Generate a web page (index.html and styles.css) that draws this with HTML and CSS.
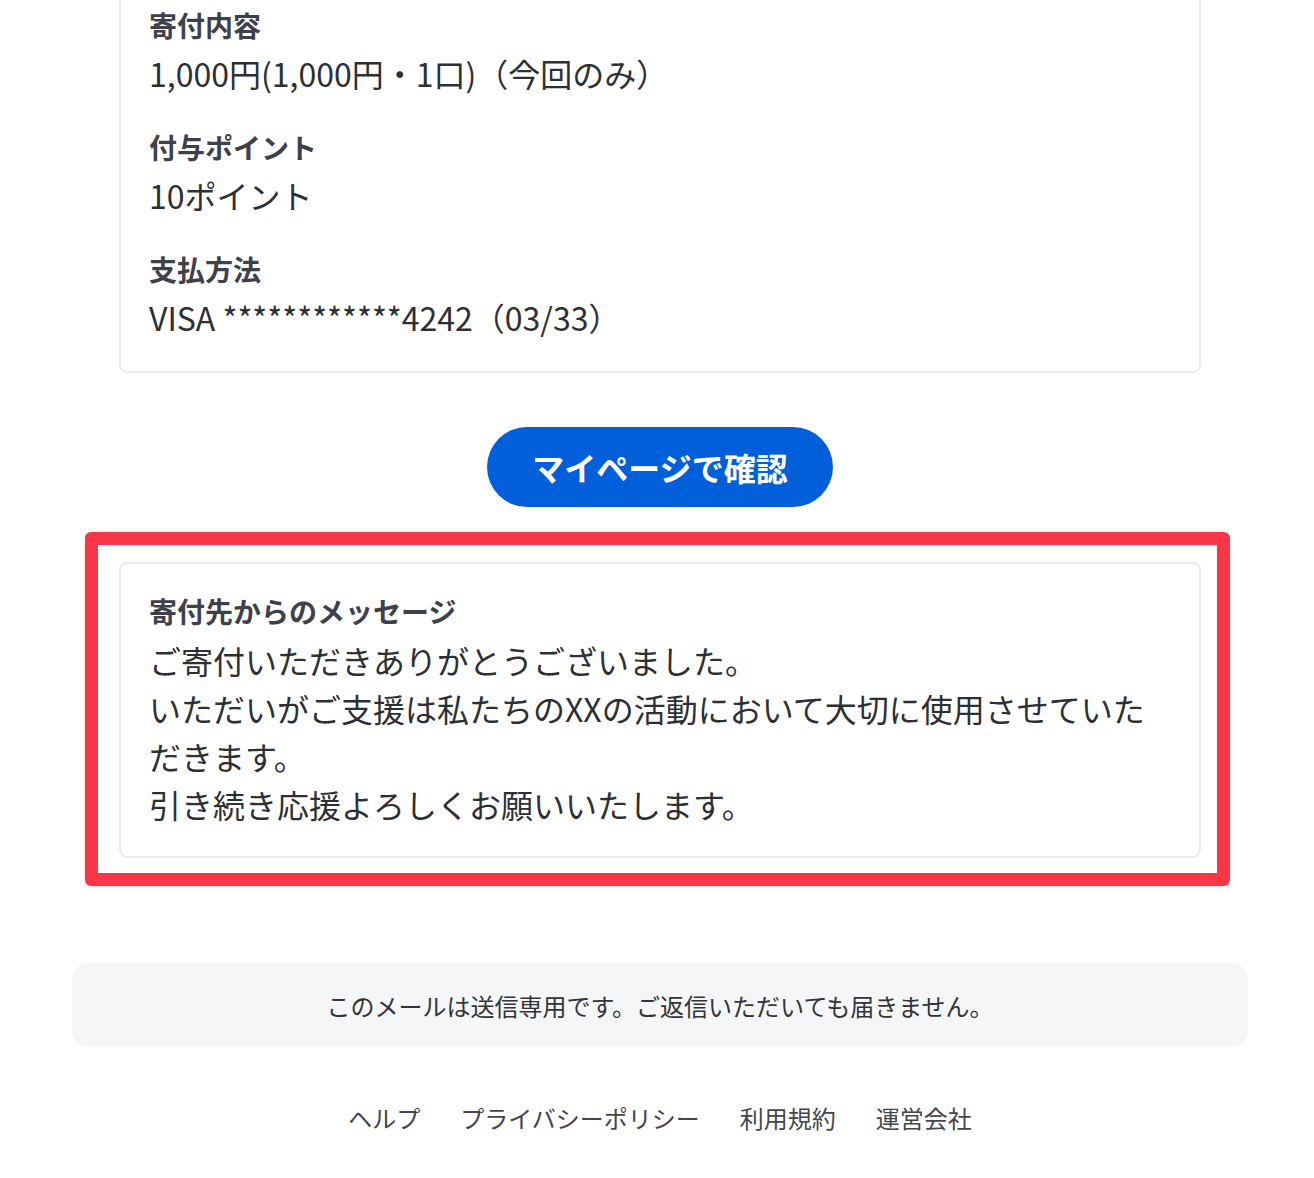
FILE: index.html
```html
<!DOCTYPE html>
<html lang="ja">
<head>
  <meta charset="UTF-8">
  <meta name="viewport" content="width=device-width, initial-scale=1.0">
  <title>寄付完了</title>
  <link rel="stylesheet" href="styles.css">
</head>
<body>
  <div class="page">
    <div class="card detail-card">
      <div class="item">
        <div class="item-label">寄付内容</div>
        <div class="item-value">1,000円(1,000円・1口)（今回のみ）</div>
      </div>
      <div class="item">
        <div class="item-label">付与ポイント</div>
        <div class="item-value">10ポイント</div>
      </div>
      <div class="item">
        <div class="item-label">支払方法</div>
        <div class="item-value">VISA ************4242（03/33）</div>
      </div>
    </div>

    <div class="action">
      <a class="mypage-button" href="#">マイページで確認</a>
    </div>

    <div class="highlight">
      <div class="card message-card">
        <div class="message-label">寄付先からのメッセージ</div>
        <p class="message-text">ご寄付いただきありがとうございました。<br>いただいがご支援は私たちのXXの活動において大切に使用させていただきます。<br>引き続き応援よろしくお願いいたします。</p>
      </div>
    </div>

    <div class="notice">このメールは送信専用です。ご返信いただいても届きません。</div>

    <nav class="footer-links">
      <a href="#">ヘルプ</a>
      <a href="#">プライバシーポリシー</a>
      <a href="#">利用規約</a>
      <a href="#">運営会社</a>
    </nav>
  </div>
</body>
</html>
```

FILE: styles.css
```css
body {
  margin: 0;
  padding: 0;
  background-color: #ffffff;
  font-family: "Noto Sans CJK JP", "Noto Sans", sans-serif;
  color: #2e2f33;
}
.page {
  width: 1176px;
  margin: 0 0 0 72px;
}
.card {
  background-color: #ffffff;
  border: 2px solid #ebebed;
  border-radius: 8px;
  padding: 0 28px;
}
.detail-card {
  margin: -30px 47px 0 47px;
  padding-top: 31px;
  padding-bottom: 28px;
}
.item + .item {
  margin-top: 26px;
}
.item-label {
  font-size: 28px;
  line-height: 44px;
  font-weight: bold;
  color: #3e404a;
}
.item-value {
  font-size: 32px;
  line-height: 52px;
  color: #2e2f33;
}
.action {
  display: flex;
  justify-content: center;
  margin-top: 54px;
}
.mypage-button {
  display: flex;
  align-items: center;
  justify-content: center;
  height: 80px;
  width: 346px;
  border-radius: 40px;
  background-color: #005fd9;
  color: #ffffff;
  font-size: 32px;
  font-weight: bold;
  text-decoration: none;
}
.highlight {
  margin: 25px 18px 0 13px;
  border: 13px solid #f93646;
  border-radius: 6px;
  padding: 17px 16px 15px 21px;
  box-shadow: 0 1px 4px rgba(0, 0, 0, 0.12);
}
.message-card {
  padding-top: 22px;
  padding-bottom: 28px;
}
.message-label {
  font-size: 28px;
  line-height: 50px;
  font-weight: bold;
  color: #3e404a;
}
.message-text {
  margin: 0;
  font-size: 32px;
  line-height: 48px;
  color: #2e2f33;
}
.notice {
  margin-top: 77px;
  height: 84px;
  display: flex;
  align-items: center;
  justify-content: center;
  background-color: #f5f6f8;
  border-radius: 16px;
  font-size: 24px;
  color: #333438;
}
.footer-links {
  display: flex;
  justify-content: center;
  gap: 40px;
  margin-top: 53px;
  line-height: 36px;
}
.footer-links a {
  font-size: 24px;
  color: #44464d;
  text-decoration: none;
}
```
